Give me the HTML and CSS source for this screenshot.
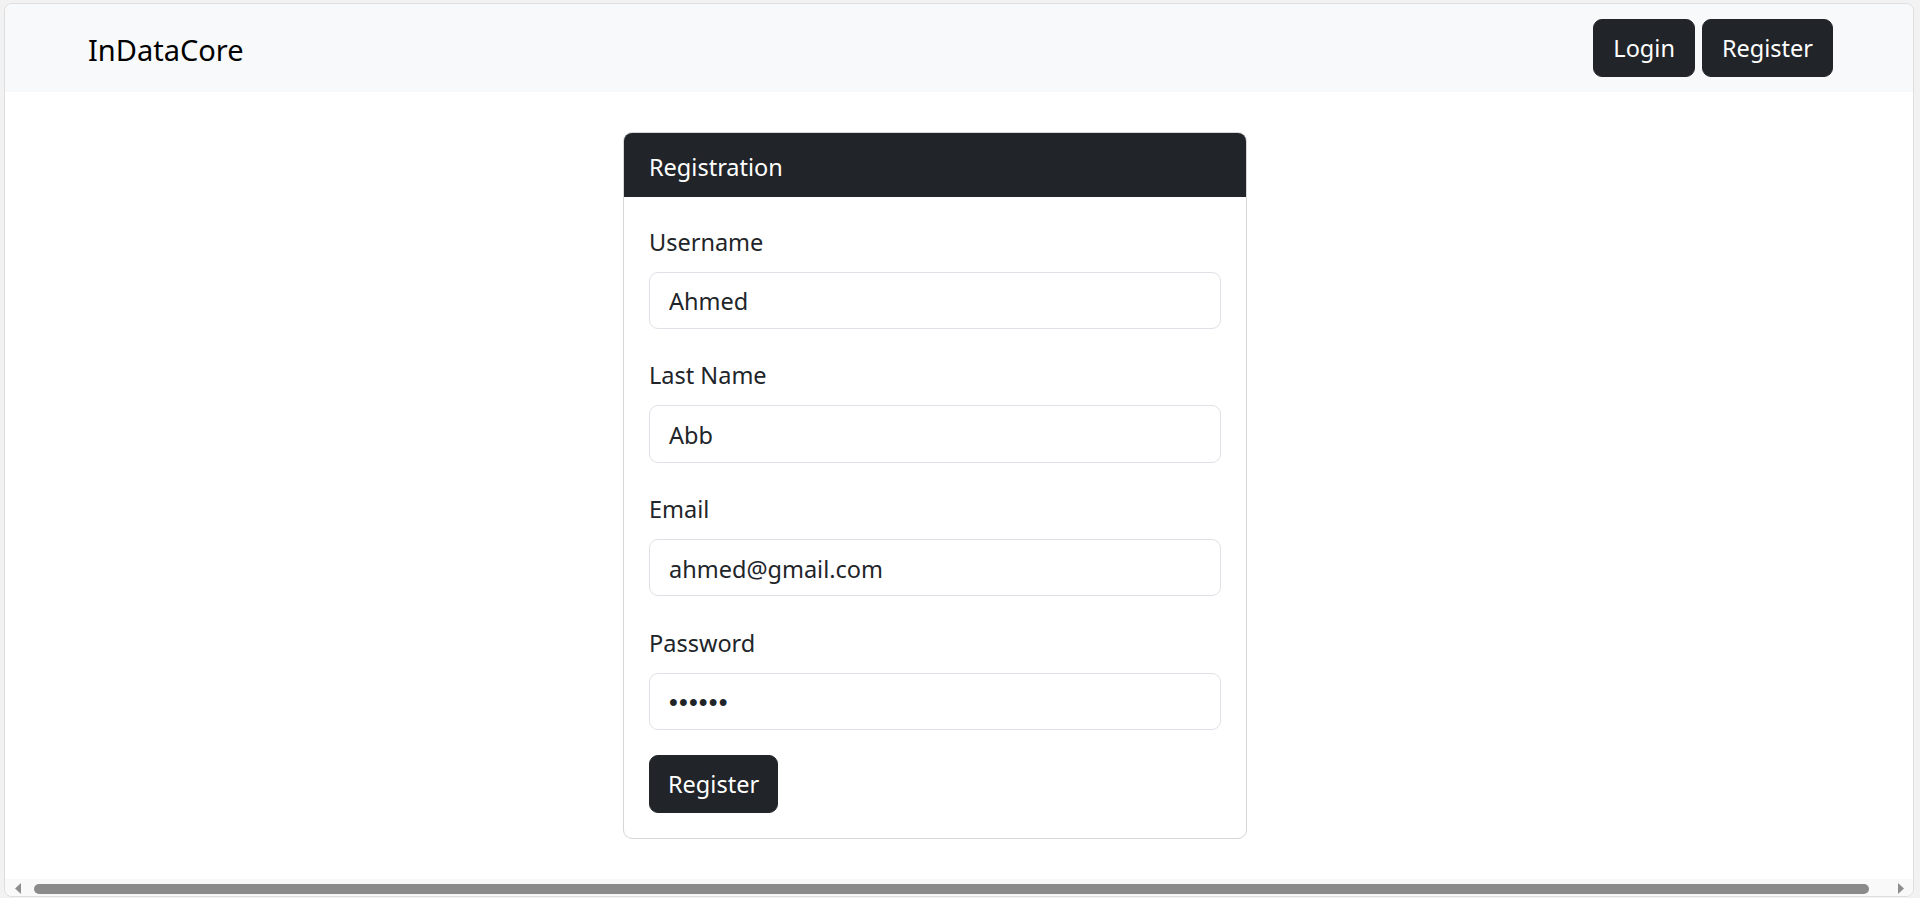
FILE: index.html
```html
<!DOCTYPE html>
<html lang="en">
<head>
<meta charset="utf-8">
<title>InDataCore - Registration</title>
<link rel="stylesheet" href="styles.css">
</head>
<body>
<div class="window">
  <div class="page">
    <nav class="navbar">
      <a class="brand" href="#">InDataCore</a>
      <div class="nav-actions">
        <button class="btn btn-dark" type="button">Login</button>
        <button class="btn btn-dark" type="button">Register</button>
      </div>
    </nav>
    <main class="content">
      <section class="card">
        <header class="card-header">Registration</header>
        <form class="card-body">
          <div class="field">
            <label class="form-label" for="username">Username</label>
            <input class="form-control" id="username" type="text" value="Ahmed">
          </div>
          <div class="field">
            <label class="form-label" for="lastname">Last Name</label>
            <input class="form-control" id="lastname" type="text" value="Abb">
          </div>
          <div class="field">
            <label class="form-label" for="email">Email</label>
            <input class="form-control" id="email" type="email" value="ahmed@gmail.com">
          </div>
          <div class="field">
            <label class="form-label" for="password">Password</label>
            <input class="form-control password" id="password" type="password" value="123456">
          </div>
          <button class="btn btn-dark" type="button">Register</button>
        </form>
      </section>
    </main>
  </div>
  <div class="hscroll">
    <svg class="arrow" width="7" height="11" viewBox="0 0 7 11"><polygon points="6,0 6,11 0,5.5" fill="#8d8d8d"/></svg>
    <div class="track"><div class="thumb"></div></div>
    <svg class="arrow" width="7" height="11" viewBox="0 0 7 11"><polygon points="0,0 0,11 6,5.5" fill="#8d8d8d"/></svg>
  </div>
</div>
</body>
</html>
```

FILE: styles.css
```css
* {
  box-sizing: border-box;
}

html, body {
  margin: 0;
  height: 100%;
}

body {
  background: #f2f2f2;
  padding: 3px 6px 1px 4px;
  font-family: "Noto Sans", "Open Sans", "DejaVu Sans", sans-serif;
  color: #212529;
}

.window {
  height: 100%;
  background: #ffffff;
  border: 1px solid #dedede;
  border-radius: 8px;
  overflow: hidden;
  display: flex;
  flex-direction: column;
}

.page {
  flex: 1;
  min-height: 0;
  overflow: hidden;
}

.navbar {
  height: 88px;
  background: #f8f9fa;
  display: flex;
  align-items: center;
  justify-content: space-between;
  padding: 0 80px 0 83px;
}

.brand {
  font-size: 29px;
  color: #000000;
  text-decoration: none;
  line-height: 1;
  margin-top: 2px;
}

.nav-actions {
  display: flex;
  gap: 7px;
}

.btn {
  font-family: inherit;
  font-size: 23.5px;
  line-height: 1;
  height: 58px;
  padding: 2px 18px 0;
  border-radius: 9px;
  border: 1px solid #212529;
  cursor: pointer;
}

.btn-dark {
  background: #212529;
  color: #ffffff;
}

.nav-actions .btn {
  padding: 2px 19px 0;
}

.content {
  padding-top: 40px;
  padding-left: 618px;
}

.card {
  width: 624px;
  border: 1px solid #d5d6d7;
  border-radius: 9px;
  overflow: hidden;
  background: #ffffff;
}

.card-header {
  height: 63.5px;
  line-height: 60px;
  padding: 3.5px 25px 0;
  background: #212529;
  color: #ffffff;
  font-size: 23.5px;
}

.card-body {
  padding: 24px 25px 25px;
  margin: 0;
}

.field {
  margin-bottom: 25.2px;
}

.form-label {
  display: block;
  height: 39px;
  padding-top: 4px;
  line-height: 35px;
  margin-bottom: 12px;
  font-size: 23.5px;
  color: #212529;
}

.form-control {
  display: block;
  width: 100%;
  height: 57.5px;
  padding: 2px 19px 0;
  border: 1px solid #dee2e6;
  border-radius: 9px;
  font-family: inherit;
  font-size: 23.5px;
  color: #212529;
  background: #ffffff;
  outline: none;
}

.password {
  font-family: "Liberation Sans", Arial, sans-serif;
  font-size: 25px;
  letter-spacing: 1.2px;
  padding-left: 19px;
}

.card-body .btn {
  height: 57.7px;
}

.hscroll {
  height: 17px;
  flex: none;
  background: #f9f9f9;
  display: flex;
  align-items: flex-start;
  padding: 4px 8px 0 10px;
}

.arrow {
  flex: none;
}

.track {
  flex: 1;
  padding: 0 29px 0 12px;
}

.thumb {
  height: 10.5px;
  border-radius: 5px;
  background: #8b8b8b;
  margin-top: 0.5px;
}
```
